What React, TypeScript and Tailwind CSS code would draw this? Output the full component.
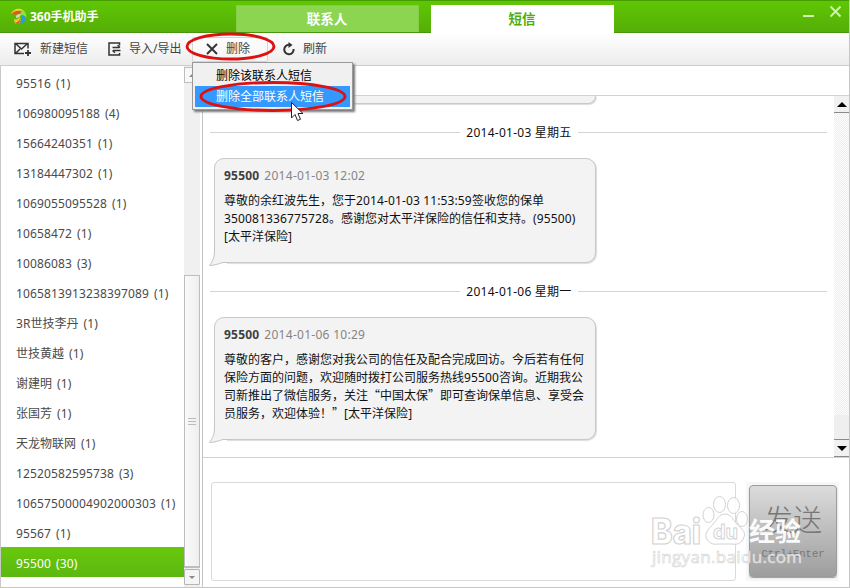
import { clsx } from "clsx";

interface Contact {
  name: string;
  count: number;
}

interface Message {
  date: string;
  from: string;
  time: string;
  lines: string[];
  height: string;
}

const contacts: Contact[] = [
  { name: "95516", count: 1 },
  { name: "106980095188", count: 4 },
  { name: "15664240351", count: 1 },
  { name: "13184447302", count: 1 },
  { name: "1069055095528", count: 1 },
  { name: "10658472", count: 1 },
  { name: "10086083", count: 3 },
  { name: "1065813913238397089", count: 1 },
  { name: "3R世技李丹", count: 1 },
  { name: "世技黄越", count: 1 },
  { name: "谢建明", count: 1 },
  { name: "张国芳", count: 1 },
  { name: "天龙物联网", count: 1 },
  { name: "12520582595738", count: 3 },
  { name: "10657500004902000303", count: 1 },
  { name: "95567", count: 1 },
  { name: "95500", count: 30 },
];

const messages: Message[] = [
  {
    date: "2014-01-03 星期五",
    from: "95500",
    time: "2014-01-03 12:02",
    lines: [
      "尊敬的余红波先生，您于2014-01-03 11:53:59签收您的保单",
      "350081336775728。感谢您对太平洋保险的信任和支持。(95500)",
      "[太平洋保险]",
    ],
    height: "h-[105px]",
  },
  {
    date: "2014-01-06 星期一",
    from: "95500",
    time: "2014-01-06 10:29",
    lines: [
      "尊敬的客户，感谢您对我公司的信任及配合完成回访。今后若有任何",
      "保险方面的问题，欢迎随时拨打公司服务热线95500咨询。近期我公",
      "司新推出了微信服务，关注“中国太保”即可查询保单信息、享受会",
      "员服务，欢迎体验！”[太平洋保险]",
    ],
    height: "h-[123px]",
  },
];

// Latin runs are tracked a little wider than the Chinese ones,
// curly quotes take the full width of a Chinese character
const Mixed = ({ text }: { text: string }) => (
  <>
    {text.split(/([\x20-\x7e]+|[“”])/).map((part, i) => {
      if (i % 2 === 0) return part;
      const quote = part === "“" || part === "”";
      return (
        <span
          key={i}
          className={quote ? "font-['Noto_Sans_CJK_SC',sans-serif] leading-none" : "tracking-[0.13px]"}
        >
          {part}
        </span>
      );
    })}
  </>
);

const Logo = () => (
  <svg className="h-[17px] w-[17px]" viewBox="0 0 17 17">
    <path d="M1 6C3 2 6 0 11 1l3 2-6 2z" fill="#f6d22c" />
    <path d="M1 7c2-4 6-5 11-4L8 7C6 6 3 6 1 7z" fill="#e8502c" />
    <path d="M12 2c3 1 5 4 4 8-1-2-3-4-6-3z" fill="#8fe045" />
    <path d="M11 8c3-1 5 1 5 3-1 3-3 4-6 5 1-3 2-5 1-8z" fill="#2e9be0" />
    <path d="M4 11c2 1 4 0 6-2 1 4 0 7-3 7-2 0-3-2-3-5z" fill="#f4c52a" />
    <path d="M5 14c2 1 3 0 5-3 0 3-1 5-3 5-1 0-1-1-2-2z" fill="#e8502c" />
    <path d="M6 8c1-2 4-3 5-1-1 2-3 3-5 3z" fill="#c9dfae" />
  </svg>
);

const TitleBar = () => (
  <header className="flex h-[33px] shrink-0 border-t border-b border-t-[#459b02] border-b-[#48960c] bg-linear-to-b from-[#5fc703] to-[#55ae07]">
    <div className="flex w-[236px] items-center pl-[10px]">
      <Logo />
      <span className="ml-[3px] text-xs font-bold text-white">360手机助手</span>
    </div>
    <div className="mt-1 flex h-[27px] w-[183px] items-center justify-center rounded-t-[1px] border border-b-0 border-[#83cf48] bg-[#8cd551] pr-px text-[13.5px] font-bold text-white">
      联系人
    </div>
    <div className="mt-1 ml-3 flex h-7 w-[183px] items-center justify-center bg-white pr-px text-[13.5px] font-bold text-[#4cae0c]">
      短信
    </div>
    <svg className="mt-1 ml-auto mr-[6px] h-4 w-10" viewBox="0 0 40 16" stroke="#d3f2b4" fill="none">
      <path d="M0 11h11" strokeWidth="2" />
      <path d="M27.500 1.500l10 10M37.500 1.500l-10 10" strokeWidth="1.800" />
    </svg>
  </header>
);

const Toolbar = () => (
  <nav className="flex h-[33px] shrink-0 items-center border-b border-[#cdcdcd] bg-linear-to-b from-white to-[#ececec] text-xs text-[#444]">
    <svg className="ml-[14px] h-4 w-[18px]" viewBox="0 0 18 16" fill="none" stroke="#333" strokeWidth="1.500">
      <path d="M10 12.500H1v-10h13v5M2 3l5.500 5L13 3M2 12l4-4" />
      <path d="M14 9v6M11 12h6" strokeWidth="1.800" />
    </svg>
    <span className="ml-2">新建短信</span>
    <svg className="ml-[20px] h-4 w-4" viewBox="0 0 16 16" fill="none" stroke="#333" strokeWidth="1.500">
      <path d="M11.500 4.500v-2.500H1v12h10.500v-2M4.500 6.500h7M5 9.500h7.500" />
      <path d="M9.500 4.300l2.500 2.200M7 11.700L4.500 9.500" />
    </svg>
    <span className="ml-[5px] w-[56px] whitespace-nowrap">导入/导出</span>
    <div className="ml-[7px] flex h-[25px] w-[76px] items-center rounded-[2px] border border-[#d4d4d4] bg-white/40">
      <svg className="ml-[13px] h-3 w-3" viewBox="0 0 12 12" stroke="#333" strokeWidth="1.900">
        <path d="M1 1l10 10M11 1L1 11" />
      </svg>
      <span className="ml-[8px]">删除</span>
    </div>
    <svg className="ml-[14px] h-[14px] w-[14px]" viewBox="0 0 14 14" fill="none">
      <path d="M7 2.800A4.700 4.700 0 1 0 11.600 7" stroke="#333" strokeWidth="2" />
      <path d="M6.500 0v6l4-3z" fill="#333" />
    </svg>
    <span className="ml-[7px]">刷新</span>
  </nav>
);

const Sidebar = () => (
  <aside className="flex w-[203px] shrink-0 border-r border-[#c4c4c4]">
    <ul className="w-[184px] border-l border-[#c9c9c9] pt-px text-xs text-[#4a4a4a]">
      {contacts.map((c) => {
        const active = c.name === "95500";
        return (
          <li
            key={c.name}
            className={clsx(
              "flex h-[30px] items-center pt-[4px] pl-[15px] whitespace-nowrap",
              active && "bg-linear-to-b from-[#68c80c] to-[#5cb811] text-white"
            )}
          >
            <span><Mixed text={c.name} /></span>
            <span className="ml-[5px] tracking-[0.13px]">({c.count})</span>
          </li>
        );
      })}
    </ul>
    <div className="flex w-4 flex-col bg-[#f0f0f0]">
      <div className="mt-px flex h-4 items-center justify-center border border-[#bdbdbd] bg-[#f8f8f8]">
        <div className="border-x-[3px] border-b-[3px] border-x-transparent border-b-[#888]" />
      </div>
      <div className="mt-[192px] flex h-[293px] flex-col items-center justify-center gap-[2px] border border-b-2 border-[#bdbdbd] bg-linear-to-r from-[#fafafa] to-[#eeeeee]">
        <div className="h-px w-2 bg-[#bbb]" />
        <div className="h-px w-2 bg-[#bbb]" />
        <div className="h-px w-2 bg-[#bbb]" />
      </div>
      <div className="mt-px flex h-4 items-center justify-center rounded-[1px] border border-[#b5b5b5] bg-[#f5f5f5]">
        <div className="border-x-[3px] border-t-[3px] border-x-transparent border-t-[#888]" />
      </div>
    </div>
  </aside>
);

const DateLine = ({ date }: { date: string }) => (
  <div className="flex h-[18px] items-center px-[7px]">
    <div className="h-px w-[250px] bg-[#d4d4d4]" />
    <span className="w-[118px] pt-px text-center text-xs tracking-[0.25px] whitespace-nowrap text-[#111]">{date}</span>
    <div className="h-px grow bg-[#d4d4d4]" />
  </div>
);

const Bubble = ({ message }: { message: Message }) => (
  <div
    className={clsx(
      "relative ml-[11px] w-[382px] rounded-[10px] rounded-bl-none border border-[#c8c8c8] bg-[#f3f3f3] pt-[8px] pl-[9px] shadow-[1px_1px_1px_#ddd]",
      message.height
    )}
  >
    <div className="h-[18px] text-xs leading-[18px] text-[#858585]">
      <b className="mr-[5px] tracking-[0.2px] text-[#3f3f3f]">{message.from}</b>
      <span className="tracking-[0.28px]">{message.time}</span>
    </div>
    <div className="mt-[7px] text-xs leading-[18px] whitespace-nowrap text-[#111]">
      {message.lines.map((line) => (
        <p key={line} className="h-[18px]"><Mixed text={line} /></p>
      ))}
    </div>
    <svg className="absolute -bottom-[5px] -left-[6px] h-[21px] w-[20px]" viewBox="0 0 20 21">
      <path d="M5 0v8L0 17v4h18v-4.500H5z" fill="#fff" />
      <path d="M5.500 0v6C5.500 12 3 16 0.500 19.500 5 19.500 9 18 14 16.500h6V0z" fill="#f3f3f3" />
      <path d="M5.500 0v6C5.500 12 3 16 0.500 19.500 5 19.500 9 18 14 16.500h6" fill="none" stroke="#c4c4c4" />
    </svg>
  </div>
);

const Scrollbar = () => (
  <div className="flex w-[15px] shrink-0 flex-col bg-[repeating-conic-gradient(#ececec_0_25%,#ffffff_0_50%)] bg-size-[2px_2px]">
    <div className="flex h-[17px] items-center justify-center border-b border-[#8a8a8a] bg-[#f1f1f1]">
      <div className="border-x-[5px] border-b-[5px] border-x-transparent border-b-black" />
    </div>
    <div className="mt-auto h-[25px] border-b border-[#8a8a8a] bg-[#efefef]" />
    <div className="flex h-[17px] items-center justify-center border-b border-[#8a8a8a] bg-[#f1f1f1]">
      <div className="border-x-[5px] border-t-[5px] border-x-transparent border-t-black" />
    </div>
  </div>
);

const Conversation = () => (
  <section className="flex h-[361px] shrink-0">
    <div className="grow overflow-hidden">
      <div className="ml-[11px] h-[8px] w-[382px] rounded-b-[10px] border border-t-0 border-[#c8c8c8] bg-[#f3f3f3] shadow-[1px_1px_1px_#ddd]" />
      <div className="flex flex-col gap-[19px] pt-[19px]">
        {messages.map((m) => (
          <div key={m.date} className="flex flex-col gap-[17px]">
            <DateLine date={m.date} />
            <Bubble message={m} />
          </div>
        ))}
      </div>
    </div>
    <Scrollbar />
  </section>
);

const Composer = () => (
  <section className="flex grow border-t border-[#d2d2d2] pt-6 pl-2">
    <div className="h-[99px] w-[525px] rounded-[3px] border border-[#dadada]" />
    <div className="ml-[10px] h-[99px] w-[93px] bg-[#f6f7f9] p-[3px]">
      <button className="flex h-[92px] w-[88px] flex-col items-center rounded-[4px] border border-[#9c9c9c] bg-linear-to-b from-[#dcdcdc] to-[#9e9e9e] pt-[15px] text-[#777] shadow-[0_1px_1px_#999]">
        <span className="text-[29px] leading-[38px] font-light">发送</span>
        <span className="mt-[7px] font-['Liberation_Mono',monospace] text-[10.5px] leading-4">Ctrl+Enter</span>
      </button>
    </div>
  </section>
);

const DeleteMenu = () => (
  <div className="absolute top-[62px] left-[192px] h-[48px] w-[161px] border border-[#999] bg-[#f0f0f0] p-[2px] text-xs shadow-[2px_2px_2px_#777]">
    <div className="flex h-[21px] items-center pl-[21px] text-black">删除该联系人短信</div>
    <div className="flex h-[21px] items-center bg-[#3399fe] pl-[21px] text-white">删除全部联系人短信</div>
  </div>
);

const Highlights = () => (
  <svg className="pointer-events-none absolute top-0 left-0 h-[130px] w-[400px]" viewBox="0 0 400 130" fill="none">
    <ellipse cx="230.500" cy="46.500" rx="43.500" ry="12.500" stroke="#dd1111" strokeWidth="2.900" />
    <ellipse cx="273" cy="96.500" rx="72" ry="14" stroke="#dd1111" strokeWidth="2.900" />
    <path d="M291.500 102.500v15.500l3.500-3.500 2.500 6 3-1.200-2.500-5.800h5z" fill="#fff" stroke="#222" />
  </svg>
);

const Watermark = () => (
  <svg
    className="pointer-events-none absolute top-[490px] left-[645px] h-[85px] w-[170px]"
    viewBox="0 0 170 85"
    fill="#fff"
    fillOpacity="0.85"
    stroke="#d2d2d2"
    fontWeight="bold"
  >
    <text x="6" y="54" fontSize="35" fontWeight="800" textLength="50" lengthAdjust="spacingAndGlyphs" fontFamily="Inter, sans-serif" strokeWidth="1.200">Bai</text>
    <path d="M80 24c6 0 8 6 12 10 5 5 9 8 7 13-2 7-8 8-12 7-4 0-10 0-14 0-5 1-10-1-12-7-1-5 3-8 7-13 4-4 6-10 12-10z" />
    <ellipse cx="63.500" cy="25" rx="5.500" ry="7.500" />
    <ellipse cx="74.500" cy="14.500" rx="6" ry="8" />
    <ellipse cx="88.500" cy="15.500" rx="6" ry="8" />
    <ellipse cx="97" cy="29" rx="5.500" ry="7.500" />
    <text x="68" y="49" fontSize="20" fontFamily="Inter, sans-serif" strokeWidth="0.900">du</text>
    <text x="104" y="51" fontSize="26" stroke="none" fillOpacity="0.95" fontFamily="Noto Sans CJK SC, sans-serif">经验</text>
    <text x="7" y="73" fontSize="17" fontWeight="normal" textLength="150" strokeWidth="0.600" fontFamily="Open Sans, sans-serif">jingyan.baidu.com</text>
  </svg>
);

export default function App() {
  return (
    <div className="relative flex h-[588px] w-[850px] flex-col overflow-hidden border-r border-b border-[#c6c6c6] bg-white font-['Noto_Sans','Noto_Sans_CJK_SC',sans-serif]">
      <TitleBar />
      <Toolbar />
      <main className="flex min-h-0 grow">
        <Sidebar />
        <div className="flex grow flex-col">
          <div className="h-[30px] shrink-0 border-b border-[#d2d2d2]" />
          <Conversation />
          <Composer />
        </div>
      </main>
      <DeleteMenu />
      <Highlights />
      <Watermark />
    </div>
  );
}
